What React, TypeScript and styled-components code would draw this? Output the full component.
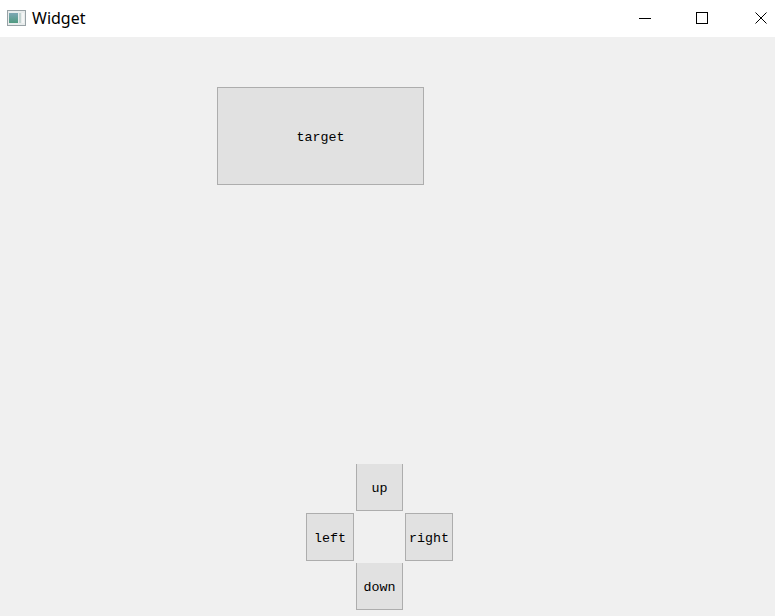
import React from 'react'
import styled, { createGlobalStyle } from 'styled-components'

const GlobalStyle = createGlobalStyle`
  html, body {
    margin: 0;
    padding: 0;
    background: #f0f0f0;
  }
`

const Window = styled.div`
  width: 775px;
  height: 616px;
  display: flex;
  flex-direction: column;
  overflow: hidden;
  background: #f0f0f0;
`

const TitleBar = styled.div`
  height: 37px;
  flex: none;
  display: flex;
  align-items: center;
  background: #fff;
`

const AppIcon = styled.svg`
  width: 19px;
  height: 16px;
  margin-left: 7px;
  margin-top: -2px;
`

const Title = styled.span`
  margin-left: 6px;
  margin-top: -1px;
  font: 16px "Noto Sans", "Open Sans", sans-serif;
  color: #000;
`

const WinButtons = styled.div`
  margin-left: auto;
  display: flex;
  align-items: center;
  margin-right: 8px;
  margin-top: -1px;
`

const WinIcon = styled.svg<{ $gap: number }>`
  width: 12px;
  height: 12px;
  display: block;
  margin-left: ${p => p.$gap}px;
  fill: none;
  stroke: #000;
  stroke-width: 1;
`

const Content = styled.div`
  flex: 1;
  display: flex;
  flex-direction: column;
`

const PushButton = styled.div<{ $noTop?: boolean }>`
  box-sizing: border-box;
  display: flex;
  align-items: center;
  justify-content: center;
  padding-top: ${p => (p.$noTop ? 3 : 2)}px;
  background: #e1e1e1;
  border: 1px solid #adadad;
  border-top-width: ${p => (p.$noTop ? 0 : 1)}px;
  font: 13.33px "Liberation Mono", "DejaVu Sans Mono", monospace;
  color: #000;
`

const TargetButton = styled(PushButton)`
  width: 207px;
  height: 98px;
  margin: 50px 0 0 217px;
`

const Pad = styled.div`
  display: grid;
  grid-template-columns: 48px 47px 48px;
  grid-template-rows: 47px 48px 47px;
  gap: 2px;
  margin: 279px 0 0 306px;
  width: 147px;
`

const Up = styled(PushButton)`
  grid-column: 2;
  grid-row: 1;
`

const Left = styled(PushButton)`
  grid-column: 1;
  grid-row: 2;
`

const Right = styled(PushButton)`
  grid-column: 3;
  grid-row: 2;
`

const Down = styled(PushButton)`
  grid-column: 2;
  grid-row: 3;
`

export default function App() {
  return (
    <Window>
      <GlobalStyle />
      <TitleBar>
        <AppIcon viewBox="0 0 19 16">
          <defs>
            <linearGradient id="pane" x1="0" y1="0" x2="0" y2="1">
              <stop offset="0" stopColor="#7da6b4" />
              <stop offset="1" stopColor="#4f9a80" />
            </linearGradient>
          </defs>
          <rect x="0.5" y="0.5" width="18" height="15" fill="#e8ecec" stroke="#98a2a6" />
          <rect x="2" y="3" width="9" height="10" fill="url(#pane)" />
          <rect x="12" y="3" width="2" height="10" fill="#c4d4d2" />
          <rect x="15" y="3" width="2" height="10" fill="#f4f6f6" />
        </AppIcon>
        <Title>Widget</Title>
        <WinButtons>
          <WinIcon $gap={0} viewBox="0 0 12 12">
            <path d="M0 6.5H12" />
          </WinIcon>
          <WinIcon $gap={45} viewBox="0 0 12 12">
            <rect x="0.5" y="0.5" width="11" height="11" />
          </WinIcon>
          <WinIcon $gap={47} viewBox="0 0 12 12">
            <path d="M0.5 0.5L11.5 11.5M11.5 0.5L0.5 11.5" />
          </WinIcon>
        </WinButtons>
      </TitleBar>
      <Content>
        <TargetButton>target</TargetButton>
        <Pad>
          <Up $noTop>up</Up>
          <Left>left</Left>
          <Right>right</Right>
          <Down $noTop>down</Down>
        </Pad>
      </Content>
    </Window>
  )
}
